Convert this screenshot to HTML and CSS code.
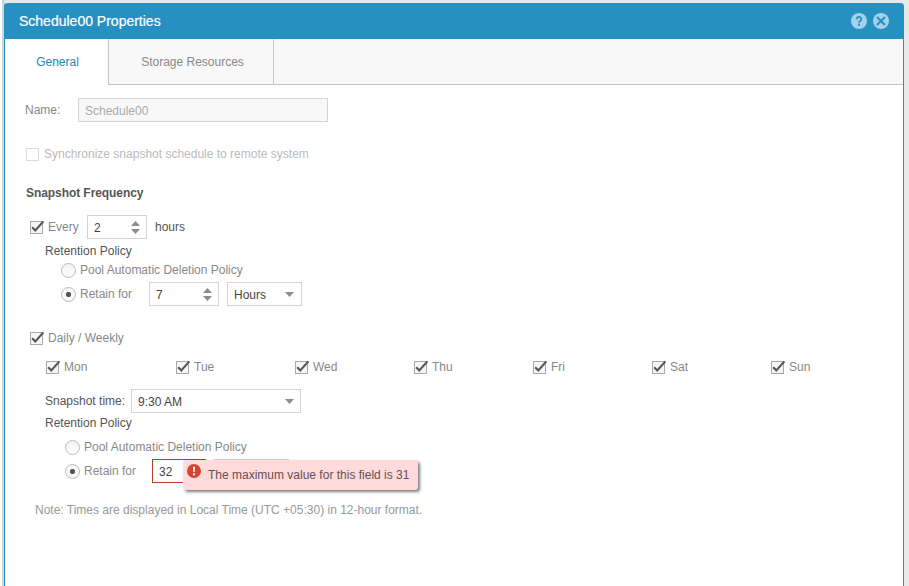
FILE: index.html
```html
<!DOCTYPE html>
<html lang="en">
<head>
    <meta charset="UTF-8">
    <title>Schedule00 Properties</title>
    <link rel="stylesheet" href="styles.css">
</head>
<body>
    <svg width="0" height="0" class="defs">
        <symbol id="check" viewBox="0 0 16 15">
            <rect x="0.5" y="1.5" width="12" height="12" fill="#f5f5f5" stroke="#a9a9a9"/>
            <path d="M2.2 7.2 L5.3 10.4 L13.4 1.4" fill="none" stroke="#555" stroke-width="2.1"/>
        </symbol>
        <symbol id="spin" viewBox="0 0 9 13">
            <path d="M0 5 L4.5 0 L9 5 Z M0 8 L4.5 13 L9 8 Z" fill="#8c8c8c"/>
        </symbol>
        <symbol id="arrow" viewBox="0 0 9 5">
            <path d="M0 0 H9 L4.5 5 Z" fill="#8c8c8c"/>
        </symbol>
    </svg>

    <div class="dialog">
        <div class="header">
            <span class="title">Schedule00 Properties</span>
            <svg class="tool" viewBox="0 0 16 16">
                <circle cx="8" cy="8" r="8" fill="#a4d2ec"/>
                <path d="M5.7 6.3 C5.7 3.2 10.4 3.3 10.4 6 C10.4 7.8 8 7.7 8 9.7" fill="none" stroke="#2790c3" stroke-width="1.8"/>
                <rect x="7" y="10.7" width="2" height="2" fill="#2790c3"/>
            </svg>
            <svg class="tool" viewBox="0 0 16 16">
                <circle cx="8" cy="8" r="8" fill="#a4d2ec"/>
                <path d="M4 4 L12 12 M12 4 L4 12" stroke="#2790c3" stroke-width="2.1"/>
            </svg>
        </div>

        <div class="tabs">
            <div class="tab active">General</div>
            <div class="tab storage">Storage Resources</div>
            <div class="tab-fill"></div>
        </div>

        <div class="content">
            <div class="row name">
                <span class="label">Name:</span>
                <div class="field disabled">Schedule00</div>
            </div>
            <div class="row sync">
                <span class="box"></span>
                <span>Synchronize snapshot schedule to remote system</span>
            </div>
            <div class="row heading">Snapshot Frequency</div>

            <div class="row every">
                <svg class="check"><use href="#check"/></svg>
                <span class="every-label">Every</span>
                <div class="field spinner small">2<svg class="spin"><use href="#spin"/></svg></div>
                <span class="dark">hours</span>
            </div>
            <div class="row policy dark">Retention Policy</div>
            <div class="row pool">
                <span class="radio"></span>
                <span>Pool Automatic Deletion Policy</span>
            </div>
            <div class="row retain">
                <span class="radio on"></span>
                <span class="retain-label">Retain for</span>
                <div class="field spinner">7<svg class="spin"><use href="#spin"/></svg></div>
                <div class="field select">Hours<svg class="arrow"><use href="#arrow"/></svg></div>
            </div>

            <div class="row daily">
                <svg class="check"><use href="#check"/></svg>
                <span>Daily / Weekly</span>
            </div>
            <div class="row days">
                <div class="day"><svg class="check"><use href="#check"/></svg><span>Mon</span></div>
                <div class="day"><svg class="check"><use href="#check"/></svg><span>Tue</span></div>
                <div class="day"><svg class="check"><use href="#check"/></svg><span>Wed</span></div>
                <div class="day"><svg class="check"><use href="#check"/></svg><span>Thu</span></div>
                <div class="day"><svg class="check"><use href="#check"/></svg><span>Fri</span></div>
                <div class="day"><svg class="check"><use href="#check"/></svg><span>Sat</span></div>
                <div class="day"><svg class="check"><use href="#check"/></svg><span>Sun</span></div>
            </div>
            <div class="row time">
                <span class="time-label dark">Snapshot time:</span>
                <div class="field select wide">9:30 AM<svg class="arrow"><use href="#arrow"/></svg></div>
            </div>
            <div class="row policy second dark">Retention Policy</div>
            <div class="row pool second">
                <span class="radio"></span>
                <span>Pool Automatic Deletion Policy</span>
            </div>
            <div class="row retain second">
                <span class="radio on"></span>
                <span class="retain-label">Retain for</span>
                <div class="field invalid">32</div>
                <div class="field select"></div>
                <div class="error">
                    <svg class="error-icon" viewBox="0 0 14 14">
                        <circle cx="7" cy="7" r="7" fill="#d64531"/>
                        <path d="M6 2.8 H8 L7.7 8 H6.3 Z M6 9.3 H8 V11.2 H6 Z" fill="#fff"/>
                    </svg>
                    <span>The maximum value for this field is 31</span>
                </div>
            </div>
            <div class="row note">Note: Times are displayed in Local Time (UTC +05:30) in 12-hour format.</div>
        </div>
    </div>
</body>
</html>
```
FILE: styles.css
```css
* {
    box-sizing: border-box;
}
body {
    margin: 0;
    padding: 3px 5px 0 4px;
    height: 586px;
    overflow: hidden;
    font-family: "Liberation Sans", Arial, sans-serif;
    font-size: 12px;
    color: #888;
    background: linear-gradient(to right, #fff 2px, #d0d6d4 2px, #d0d6d4 5px, #e8e8e6 5px);
}
.defs {
    position: absolute;
}
.dialog {
    height: 600px;
    background: #fff;
    border: 1px solid #2790c3;
    border-top: none;
    border-radius: 4px 4px 0 0;
}
.header {
    display: flex;
    align-items: center;
    gap: 6px;
    height: 36px;
    padding: 0 15px;
    margin: 0 -1px;
    background: #2790c3;
    border-radius: 4px 4px 0 0;
}
.title {
    flex: 1;
    font-size: 14px;
    color: #fff;
    -webkit-text-stroke: 0.2px #fff;
}
.tool {
    width: 16px;
    height: 16px;
}
.tabs {
    display: flex;
    height: 46px;
}
.tab {
    display: flex;
    align-items: center;
    justify-content: center;
    border-right: 1px solid #c8c8c8;
}
.active {
    width: 104px;
    padding-left: 2px;
    color: #1f86ba;
}
.storage {
    width: 165px;
    padding-left: 3px;
}
.storage,
.tab-fill {
    background: #f8f8f8;
    border-bottom: 1px solid #c0c0c0;
}
.tab-fill {
    flex: 1;
}
.content {
    padding: 13px 20px 0;
}
.row {
    display: flex;
    align-items: center;
    height: 24px;
    white-space: nowrap;
}
.dark {
    color: #555;
}
.field {
    display: flex;
    align-items: center;
    justify-content: space-between;
    width: 70px;
    height: 24px;
    padding: 1px 6px 0;
    border: 1px solid #d4d4d4;
    background: #fff;
    color: #444;
}
.label {
    width: 53px;
}
.name .disabled {
    width: 250px;
    background: #f8f8f8;
    color: #aaa;
}
.sync {
    margin-top: 20px;
    padding-left: 1px;
    color: #bbb;
}
.box {
    width: 13px;
    height: 13px;
    margin-right: 5px;
    border: 1px solid #ddd;
}
.heading {
    margin-top: 15px;
    padding-left: 1px;
    font-weight: bold;
    letter-spacing: -0.07px;
    color: #555;
}
.every {
    margin-top: 10px;
    padding-left: 5px;
}
.check {
    width: 16px;
    height: 15px;
    margin-right: 2px;
}
.every-label {
    width: 39px;
}
.small {
    width: 60px;
    margin-right: 8px;
}
.spin {
    width: 9px;
    height: 13px;
}
.arrow {
    width: 9px;
    height: 5px;
}
.policy {
    padding-left: 20px;
}
.pool {
    height: 14px;
    padding-left: 36px;
}
.radio {
    width: 15px;
    height: 15px;
    margin-right: 4px;
    flex: none;
    border: 1px solid #bbb;
    border-radius: 50%;
    background: linear-gradient(#f3f3f3, #fff);
}
.on {
    background: radial-gradient(circle, #555 2.2px, #f8f8f8 3px);
}
.retain {
    margin-top: 5px;
    padding-left: 36px;
}
.retain-label {
    width: 69px;
}
.retain .select {
    width: 75px;
    margin-left: 8px;
    padding-right: 7px;
}
.daily {
    margin-top: 20px;
    padding-left: 5px;
}
.days {
    margin-top: 5px;
    padding-left: 21px;
}
.day {
    display: flex;
    flex: none;
    align-items: center;
    width: 119px;
}
.day:first-child {
    width: 130px;
}
.time {
    margin-top: 10px;
    padding-left: 20px;
}
.time-label {
    width: 86px;
}
.wide {
    width: 170px;
}
.policy.second {
    height: 20px;
}
.pool.second {
    height: 20px;
    margin-top: 4px;
    padding-left: 40px;
}
.retain.second {
    position: relative;
    margin-top: 2px;
    padding-left: 40px;
}
.second .retain-label {
    width: 68px;
}
.invalid {
    width: 54px;
    border-color: #c0392b;
}
/* validation message, floats over the field */
.error {
    position: absolute;
    left: 158px;
    top: 1px;
    display: flex;
    align-items: center;
    gap: 7px;
    width: 235px;
    height: 30px;
    padding-left: 4px;
    color: #665052;
    background: #ffdbdb;
    border-radius: 3px;
    box-shadow: 2px 2px 3px rgba(0, 0, 0, 0.5);
}
.error-icon {
    width: 14px;
    height: 14px;
    margin-bottom: 9px;
}
.note {
    margin-top: 15px;
    padding-left: 10px;
    color: #999;
}
```
